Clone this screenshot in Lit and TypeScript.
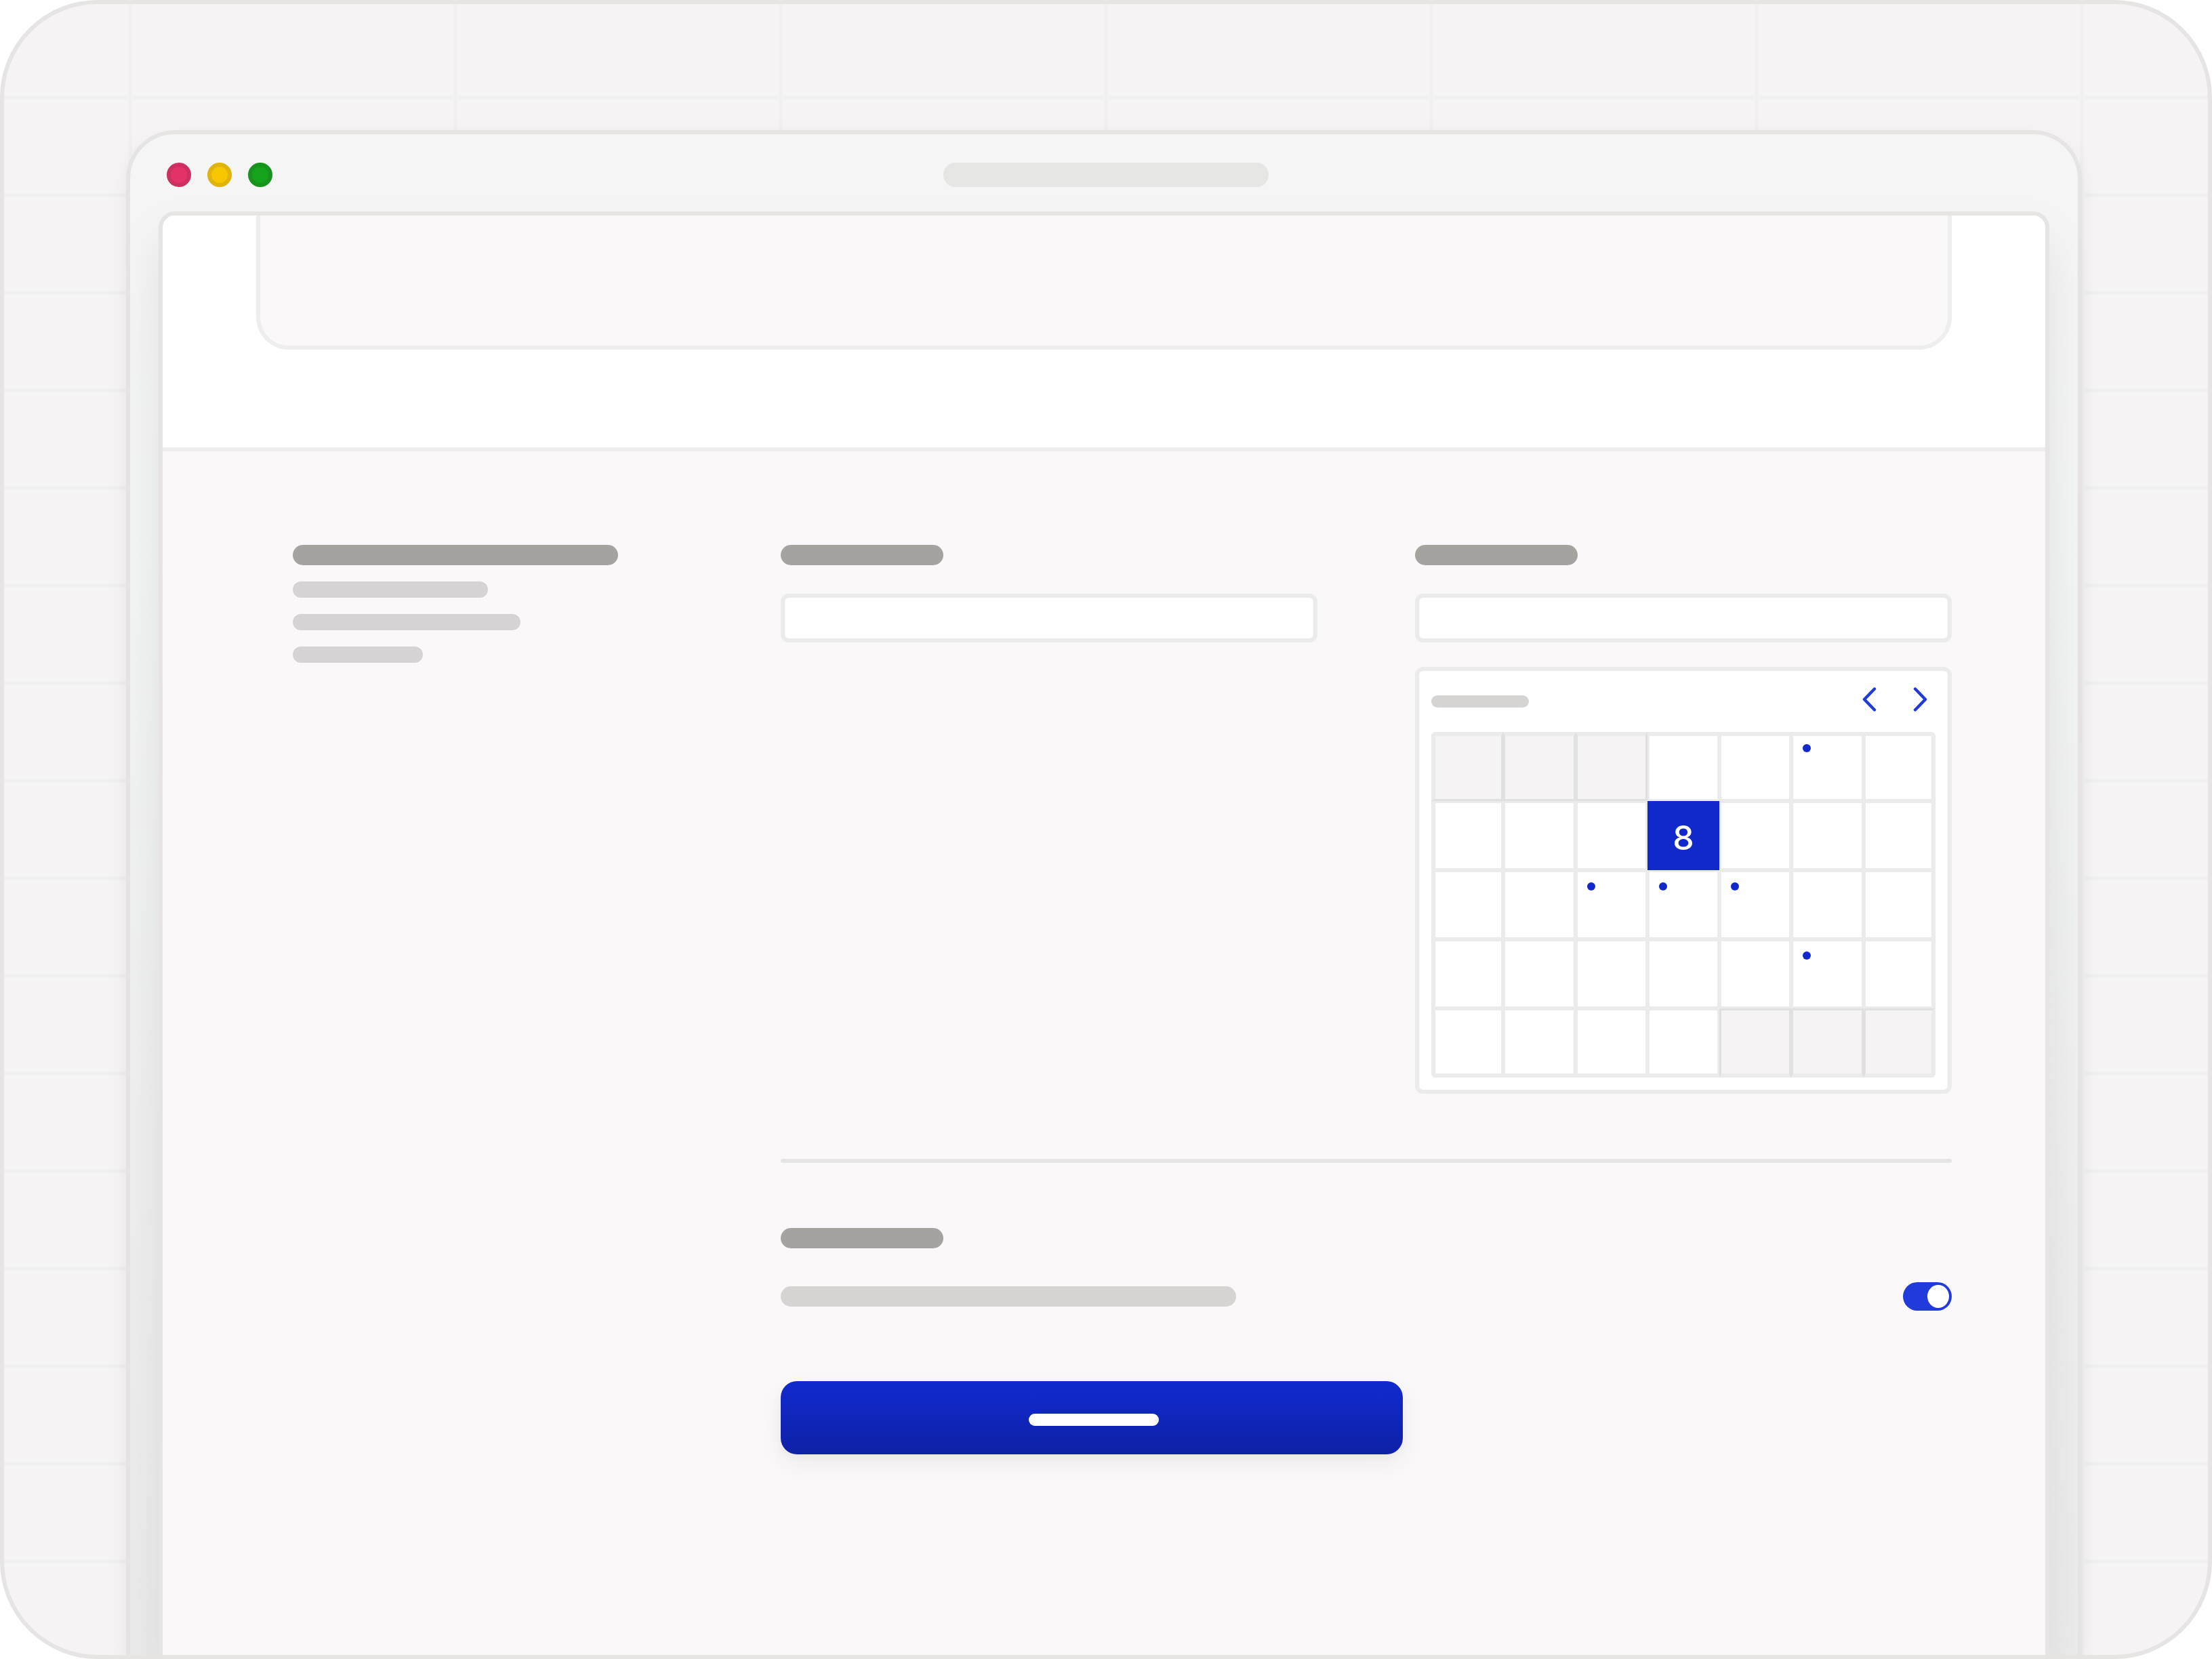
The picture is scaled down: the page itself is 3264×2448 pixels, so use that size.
import { LitElement, html, css, svg } from "lit";
import { customElement, state } from "lit/decorators.js";
import { classMap } from "lit/directives/class-map.js";

interface Day {
  label?: string;
  outside?: boolean;
  marked?: boolean;
}

const COLUMNS = 7;
const ROWS = 5;
const OUTSIDE = new Set([0, 1, 2, 32, 33, 34]);
const MARKED = new Set([5, 16, 17, 18, 26]);
const SELECTED = 10;

const WEEKS: Day[][] = Array.from({ length: ROWS }, (_, r) =>
  Array.from({ length: COLUMNS }, (_, c) => {
    const i = r * COLUMNS + c;
    return {
      label: i === SELECTED ? "8" : undefined,
      outside: OUTSIDE.has(i),
      marked: MARKED.has(i),
    };
  })
);

@customElement("month-calendar")
export class MonthCalendar extends LitElement {
  static styles = css`
    :host {
      display: block;
      box-sizing: border-box;
      background: #fff;
      border: 6px solid #ebebeb;
      border-radius: 12px;
      padding: 0 18px 18px;
    }
    .head {
      display: flex;
      align-items: center;
      justify-content: space-between;
      height: 90px;
    }
    .month {
      width: 144px;
      height: 18px;
      border-radius: 9px;
      background: #d5d4d2;
    }
    .nav {
      display: flex;
      gap: 26px;
    }
    .arrow {
      display: block;
      width: 48px;
      height: 48px;
      padding: 0;
      border: 0;
      background: none;
      cursor: pointer;
    }
    .arrow svg {
      display: block;
      fill: none;
      stroke: #213adb;
      stroke-width: 4.4;
      stroke-linecap: round;
      stroke-linejoin: round;
    }
    .days {
      width: 100%;
      table-layout: fixed;
      border-collapse: separate;
      border-spacing: 0;
    }
    .day {
      box-sizing: border-box;
      height: 102px;
      padding: 0;
      vertical-align: top;
      border: 3px solid #ebebeb;
    }
    .day.outside {
      background: #f5f3f4;
      border-color: #e1e0e0;
    }
    .day.selected {
      background: #1129cc;
      border-color: #1129cc;
      vertical-align: middle;
    }
    .week .day:first-child {
      border-left: 6px solid #ebebeb;
    }
    .week .day:last-child {
      border-right: 6px solid #ebebeb;
    }
    .week:first-child .day {
      border-top: 6px solid #ebebeb;
    }
    .week:last-child .day {
      border-bottom: 6px solid #ebebeb;
    }
    .week:first-child .day:first-child {
      border-top-left-radius: 6px;
    }
    .week:first-child .day:last-child {
      border-top-right-radius: 6px;
    }
    .week:last-child .day:first-child {
      border-bottom-left-radius: 6px;
    }
    .week:last-child .day:last-child {
      border-bottom-right-radius: 6px;
    }
    .dot {
      width: 12px;
      height: 12px;
      margin: 15px 0 0 14px;
      border-radius: 50%;
      background: #1129cc;
    }
    .week:first-child .dot {
      margin-top: 12px;
    }
    .pick {
      display: block;
      width: 100%;
      height: 96px;
      padding: 6px 0 0;
      border: 0;
      background: none;
      color: #fff;
      font: 500 50px/60px Inter, "Liberation Sans", sans-serif;
      text-align: center;
      cursor: pointer;
    }
  `;

  render() {
    return html`
      <div class="head">
        <div class="month"></div>
        <div class="nav">
          <button class="arrow" type="button" aria-label="Previous month">
            <svg width="48" height="48" viewBox="0 0 48 48">${svg`<path d="M32 5.5 17 21 32 36.5" />`}</svg>
          </button>
          <button class="arrow" type="button" aria-label="Next month">
            <svg width="48" height="48" viewBox="0 0 48 48">${svg`<path d="M18 5.5 33 21 18 36.5" />`}</svg>
          </button>
        </div>
      </div>
      <table class="days">
        <tbody>
          ${WEEKS.map(
            (week) => html`<tr class="week">
              ${week.map(
                (day) => html`<td
                  class=${classMap({
                    day: true,
                    outside: !!day.outside,
                    selected: !!day.label,
                  })}
                >${day.marked ? html`<div class="dot"></div>` : ""}${day.label
                  ? html`<button class="pick" type="button">${day.label}</button>`
                  : ""}</td>`
              )}
            </tr>`
          )}
        </tbody>
      </table>
    `;
  }
}

@customElement("app-root")
export class AppRoot extends LitElement {
  @state() private enabled = true;

  static styles = css`
    :host {
      display: block;
      background: #fff;
    }
    * {
      box-sizing: border-box;
    }
    .stage {
      display: flex;
      min-height: 100vh;
      padding: 186px 186px 0 180px;
      border: 6px solid #e6e5e4;
      border-radius: 144px;
      overflow: hidden;
      background-color: #f5f3f4;
      background-image: linear-gradient(90deg, #f1f0f0 6px, transparent 6px),
        linear-gradient(#f1f0f0 6px, transparent 6px);
      background-size: 480px 480px, 144px 144px;
      background-position: 183px 0, 0 135px;
    }
    .window {
      flex: 1;
      display: flex;
      flex-direction: column;
      border: 6px solid #e6e5e4;
      border-bottom: 0;
      border-radius: 72px 72px 0 0;
      background: linear-gradient(#f5f5f5, #f3f4f4 600px, #ebebeb);
      background-clip: padding-box;
      box-shadow: 0 12px 36px rgba(0, 0, 0, 0.05);
    }
    .titlebar {
      display: grid;
      grid-template-columns: 1fr 480px 1fr;
      align-items: center;
      padding: 42px 48px 36px 54px;
    }
    .lights {
      display: flex;
      gap: 24px;
    }
    .light {
      width: 36px;
      height: 36px;
      border-radius: 50%;
      border: 6px solid;
    }
    .close {
      background: #e23268;
      border-color: #cc2f60;
    }
    .minimise {
      background: #f7c600;
      border-color: #e0b40a;
    }
    .expand {
      background: #16a31c;
      border-color: #17941e;
    }
    .address {
      height: 36px;
      border-radius: 18px;
      background: #e6e6e4;
    }
    .screen {
      flex: 1;
      margin: 0 42px;
      border: 6px solid #e6e5e4;
      border-bottom: 0;
      border-radius: 24px 24px 0 0;
      background: #faf8f9;
      box-shadow: 0 36px 72px rgba(0, 0, 0, 0.08);
      overflow: hidden;
    }
    .hero {
      height: 348px;
      padding: 0 138px;
      background: #fff;
      border-bottom: 6px solid #efedee;
    }
    .panel {
      height: 198px;
      border: 6px solid #efeeee;
      border-top: 0;
      border-radius: 0 0 48px 48px;
      background: #faf8f9;
    }
    .form {
      display: grid;
      grid-template-columns: 576px 1fr;
      align-items: start;
      gap: 144px;
      padding: 138px 138px 138px 192px;
    }
    .intro {
      display: flex;
      flex-direction: column;
      gap: 24px;
    }
    .bar {
      display: block;
      height: 30px;
      border-radius: 15px;
      background: #a6a29f;
    }
    .line {
      height: 24px;
      border-radius: 12px;
      background: #d5d3d3;
    }
    .w192 {
      width: 192px;
    }
    .w240 {
      width: 240px;
    }
    .w288 {
      width: 288px;
    }
    .w336 {
      width: 336px;
    }
    .w480 {
      width: 480px;
    }
    .w672 {
      width: 672px;
    }
    .soft {
      background: #d5d4d2;
    }
    .pair {
      display: grid;
      grid-template-columns: 1fr 1fr;
      align-items: start;
      gap: 144px;
    }
    .field {
      display: flex;
      flex-direction: column;
    }
    .input {
      width: 100%;
      height: 72px;
      margin: 42px 0 0;
      padding: 0 18px;
      border: 6px solid #ebebeb;
      border-radius: 12px;
      background: #fff;
      font: 32px Inter, "Liberation Sans", sans-serif;
    }
    .calendar {
      margin-top: 36px;
    }
    .rule {
      height: 6px;
      margin: 96px 0;
      border: 0;
      border-radius: 3px;
      background: #e6e5e5;
    }
    .setting {
      display: flex;
      align-items: center;
      justify-content: space-between;
      margin: 50px 0 104px;
    }
    .toggle {
      appearance: none;
      display: flex;
      align-items: center;
      width: 72px;
      height: 42px;
      margin: 0;
      padding: 0 4px;
      border-radius: 21px;
      background: #a6a29f;
      cursor: pointer;
    }
    .toggle::before {
      content: "";
      width: 32px;
      height: 34px;
      border-radius: 50%;
      background: #fff;
    }
    .toggle:checked {
      justify-content: flex-end;
      background: #213adb;
    }
    .submit {
      display: flex;
      align-items: center;
      justify-content: center;
      width: 918px;
      max-width: 100%;
      height: 108px;
      padding: 6px 0 0 6px;
      border: 0;
      border-radius: 24px;
      background: linear-gradient(#112acf, #0e21a6);
      box-shadow: 0 12px 36px rgba(0, 0, 0, 0.06), 0 6px 12px rgba(0, 0, 0, 0.03);
      cursor: pointer;
    }
    .caption {
      width: 192px;
      height: 18px;
      border-radius: 9px;
      background: #fff;
    }
  `;

  private onToggle(e: Event) {
    this.enabled = (e.target as HTMLInputElement).checked;
  }

  render() {
    return html`
      <div class="stage">
        <div class="window">
          <div class="titlebar">
            <div class="lights">
              <div class="light close"></div>
              <div class="light minimise"></div>
              <div class="light expand"></div>
            </div>
            <div class="address"></div>
          </div>
          <main class="screen">
            <section class="hero"><div class="panel"></div></section>
            <section class="form">
              <div class="intro">
                <div class="bar w480"></div>
                <div class="line w288"></div>
                <div class="line w336"></div>
                <div class="line w192"></div>
              </div>
              <div class="fields">
                <div class="pair">
                  <div class="field">
                    <label class="bar w240" for="name" aria-label="Name"></label>
                    <input class="input" id="name" type="text" aria-label="Name" />
                  </div>
                  <div class="field">
                    <label class="bar w240" for="date" aria-label="Date"></label>
                    <input class="input" id="date" type="text" aria-label="Date" />
                    <month-calendar class="calendar"></month-calendar>
                  </div>
                </div>
                <hr class="rule" />
                <div class="bar w240"></div>
                <div class="setting">
                  <label class="bar soft w672" for="notify" aria-label="Notifications"></label>
                  <input
                    class="toggle"
                    id="notify"
                    type="checkbox"
                    aria-label="Notifications"
                    .checked=${this.enabled}
                    @change=${this.onToggle}
                  />
                </div>
                <button class="submit" type="button" aria-label="Submit">
                  <span class="caption"></span>
                </button>
              </div>
            </section>
          </main>
        </div>
      </div>
    `;
  }
}
